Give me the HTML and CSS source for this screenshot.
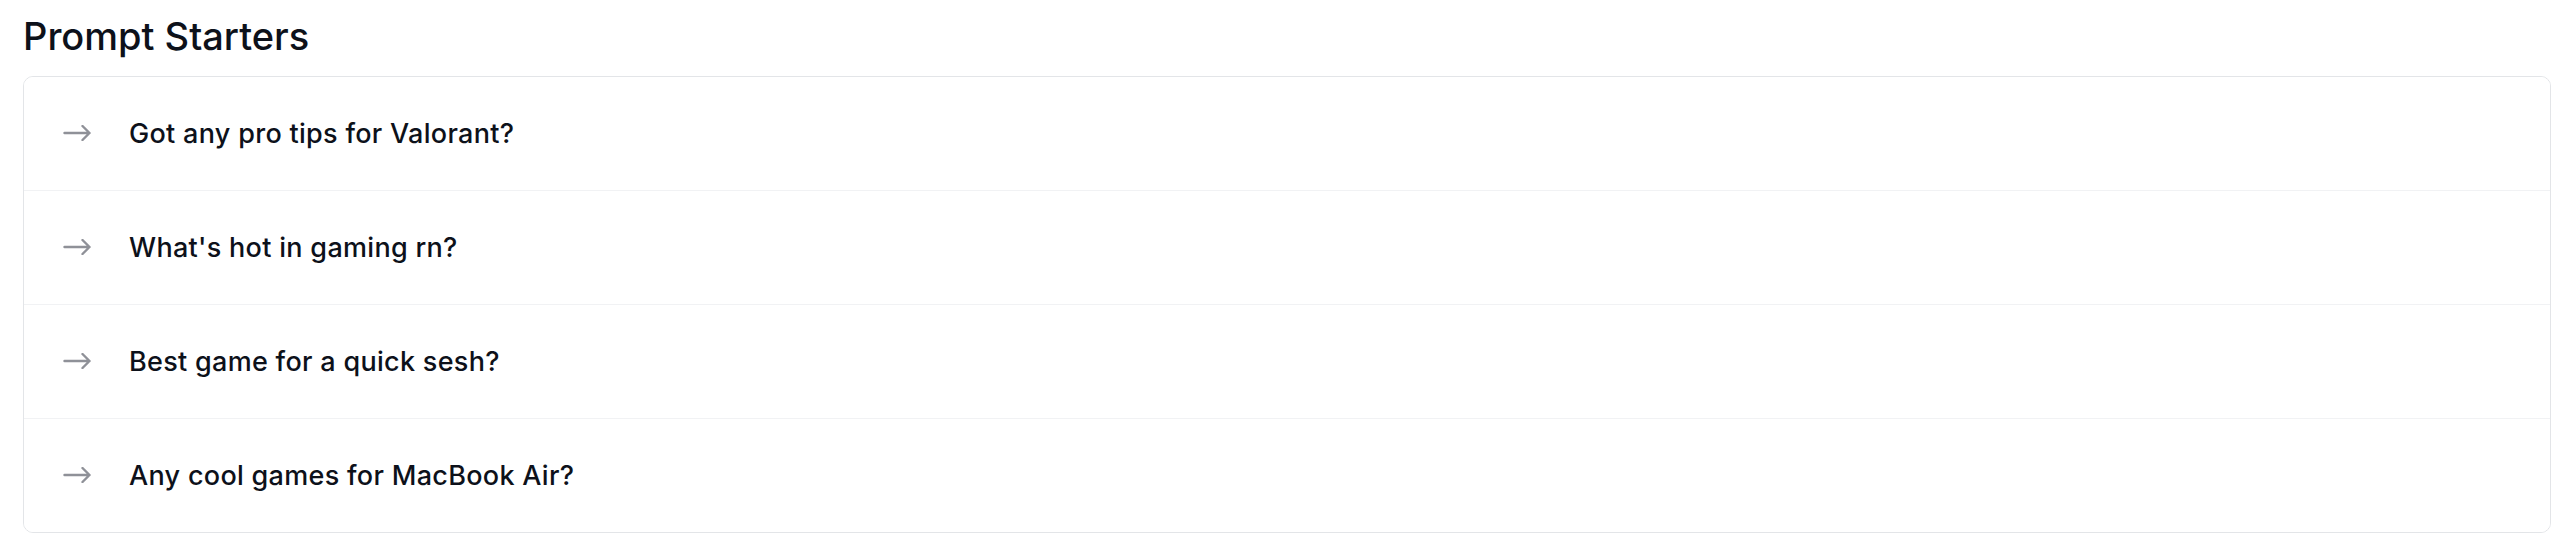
FILE: index.html
```html
<!DOCTYPE html>
<html lang="en">
<head>
<meta charset="utf-8">
<title>Prompt Starters</title>
<link rel="stylesheet" href="styles.css">
</head>
<body>
<main class="page">
  <h2 class="title">Prompt Starters</h2>
  <div class="card">
    <button class="row">
      <svg class="arrow" width="28" height="16" viewBox="0 0 28 16" fill="none" stroke="currentColor" stroke-width="2.4" stroke-linecap="round" stroke-linejoin="round"><path d="M1.5 8H26.5M19.5 1L26.5 8L19.5 15"/></svg>
      <span class="label">Got any pro tips for Valorant?</span>
    </button>
    <button class="row">
      <svg class="arrow" width="28" height="16" viewBox="0 0 28 16" fill="none" stroke="currentColor" stroke-width="2.4" stroke-linecap="round" stroke-linejoin="round"><path d="M1.5 8H26.5M19.5 1L26.5 8L19.5 15"/></svg>
      <span class="label">What's hot in gaming rn?</span>
    </button>
    <button class="row">
      <svg class="arrow" width="28" height="16" viewBox="0 0 28 16" fill="none" stroke="currentColor" stroke-width="2.4" stroke-linecap="round" stroke-linejoin="round"><path d="M1.5 8H26.5M19.5 1L26.5 8L19.5 15"/></svg>
      <span class="label">Best game for a quick sesh?</span>
    </button>
    <button class="row">
      <svg class="arrow" width="28" height="16" viewBox="0 0 28 16" fill="none" stroke="currentColor" stroke-width="2.4" stroke-linecap="round" stroke-linejoin="round"><path d="M1.5 8H26.5M19.5 1L26.5 8L19.5 15"/></svg>
      <span class="label">Any cool games for MacBook Air?</span>
    </button>
  </div>
</main>
</body>
</html>
```
FILE: styles.css
```css
html, body {
  margin: 0;
  background: #ffffff;
}
.page {
  padding: 13px 25px 0 23px;
  font-family: Inter, "Noto Sans", "Liberation Sans", sans-serif;
  color: #0f1419;
}
.title {
  margin: 0 0 17px 0;
  font-size: 38px;
  line-height: 46px;
  font-weight: 500;
  color: #0d111a;
  letter-spacing: 0;
}
.card {
  border: 1px solid #e3e5e8;
  border-radius: 10px;
  display: flex;
  flex-direction: column;
  overflow: hidden;
}
.row {
  box-sizing: content-box;
  display: flex;
  align-items: center;
  height: 113px;
  padding: 0 0 0 39px;
  margin: 0;
  border: 0;
  background: #ffffff;
  font: inherit;
  text-align: left;
  color: inherit;
  cursor: pointer;
  gap: 38px;
}
.row + .row {
  border-top: 1px solid #f1f2f4;
}
.arrow {
  color: #8f9198;
  flex: none;
  margin-bottom: 2px;
}
.label {
  font-size: 27px;
  letter-spacing: 0.3px;
  font-weight: 500;
  color: #0d111a;
}
```
